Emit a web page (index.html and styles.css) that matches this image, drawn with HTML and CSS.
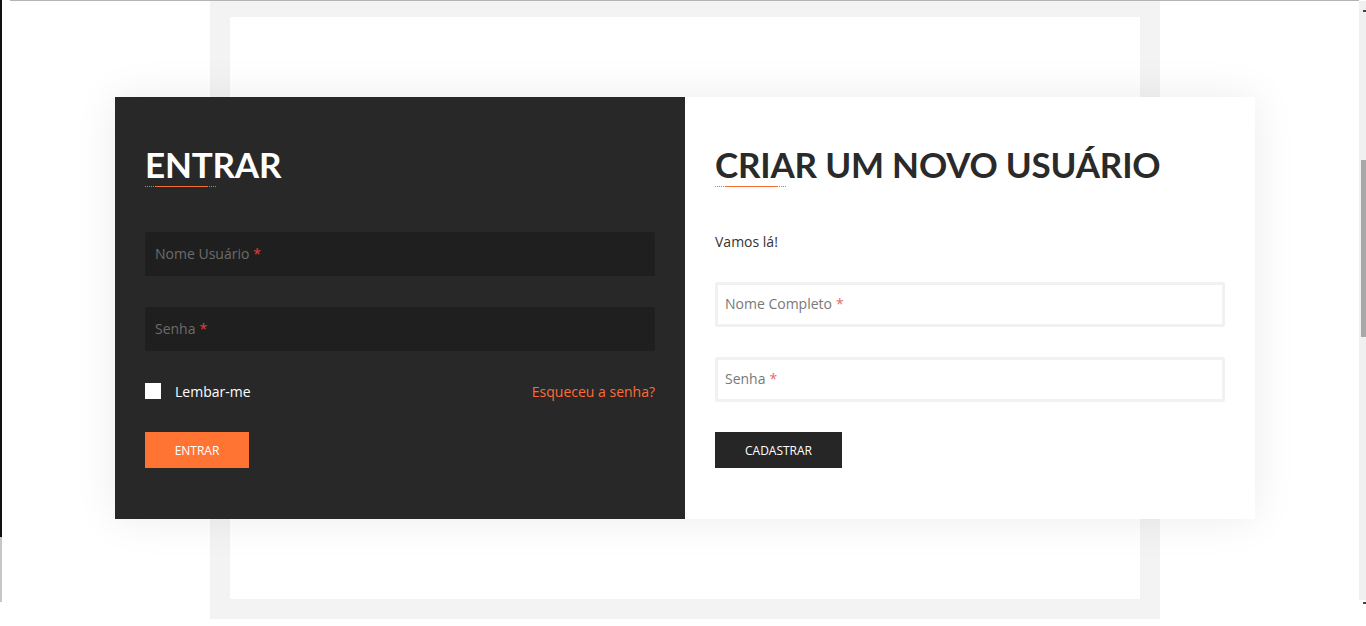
FILE: index.html
```html
<!DOCTYPE html>
<html lang="pt-BR">
<head>
<meta charset="utf-8">
<title>Entrar</title>
<link rel="stylesheet" href="styles.css">
</head>
<body>
<div class="edge"><div class="edge-dark"></div><div class="edge-grey"></div></div>
<main class="main">
  <div class="frame"><div class="frame-inner"></div></div>
</main>
<div class="scrollbar">
  <span class="arrow arrow-up"></span>
  <div class="track"><div class="thumb"></div></div>
  <span class="arrow arrow-down"></span>
</div>

<section class="modal">
  <div class="panel panel-dark">
    <h2 class="title title-light">ENTRAR</h2>
    <div class="underline"><span class="dots"></span><span class="solid"></span><span class="dots"></span></div>
    <div class="field field-dark field-first"><span class="ph">Nome Usuário</span><span class="req">*</span></div>
    <div class="field field-dark field-next"><span class="ph">Senha</span><span class="req">*</span></div>
    <div class="remember-row">
      <label class="remember"><span class="box"></span>Lembar-me</label>
      <a class="forgot" href="#">Esqueceu a senha?</a>
    </div>
    <button class="btn btn-orange">ENTRAR</button>
  </div>
  <div class="panel panel-light">
    <h2 class="title title-dark">CRIAR UM NOVO USUÁRIO</h2>
    <div class="underline"><span class="dots"></span><span class="solid"></span><span class="dots"></span></div>
    <p class="intro">Vamos lá!</p>
    <div class="field field-light field-reg"><span class="ph">Nome Completo</span><span class="req">*</span></div>
    <div class="field field-light field-next"><span class="ph">Senha</span><span class="req">*</span></div>
    <button class="btn btn-dark">CADASTRAR</button>
  </div>
</section>
</body>
</html>
```

FILE: styles.css
```css
* { box-sizing: border-box; }
html, body { margin: 0; padding: 0; }
body {
  width: 1366px;
  height: 626px;
  overflow: hidden;
  background: #ffffff;
  font-family: "Open Sans", "Liberation Sans", sans-serif;
  display: flex;
  position: relative;
}

/* left edge artifact */
.edge { width: 2px; display: flex; flex-direction: column; }
.edge-dark { height: 537px; background: #111; }
.edge-grey { height: 65px; background: #c6c6c6; }

/* background page */
.main {
  flex: 1;
  position: relative;
  padding-left: 208px;
}
.main::before {
  content: "";
  position: absolute;
  left: 8px; right: 0; top: 0;
  height: 1px;
  background: #b4b4b4;
}
.frame {
  width: 950px;
  height: 619px;
  background: #f3f3f3;
  padding: 17px 20px 20px;
}
.frame-inner { width: 100%; height: 100%; background: #ffffff; }

/* scrollbar */
.scrollbar {
  width: 7px;
  display: flex;
  flex-direction: column;
  position: relative;
  padding-top: 1px;
}
.track {
  height: 599px;
  background: #f0f0f0;
  display: flex;
  justify-content: flex-end;
  padding-top: 159px;
}
.thumb { width: 5px; height: 177px; background: #a8a8a8; }
.arrow {
  position: absolute;
  right: 0;
  width: 3px; height: 2px;
  background: #444;
}
.arrow-up { top: 10px; }
.arrow-down { top: 602px; }

/* modal */
.modal {
  position: absolute;
  left: 115px;
  top: 97px;
  width: 1140px;
  height: 422px;
  display: flex;
  box-shadow: 0 0 40px rgba(0, 0, 0, 0.08);
}
.panel {
  width: 570px;
  padding: 46px 30px 0;
  display: flex;
  flex-direction: column;
  align-items: flex-start;
}
.panel-dark { background: #282828; }
.panel-light { background: #ffffff; }

.title {
  margin: 0;
  font-family: Lato, "Open Sans", sans-serif;
  font-weight: 700;
  font-size: 35px;
  line-height: 43px;
  letter-spacing: -0.2px;
}
.title-light { color: #ffffff; }
.title-dark { color: #2a2a2a; }

.underline { display: flex; height: 1px; }
.underline .dots {
  width: 10px;
  background: repeating-linear-gradient(to right, #f26d2e 0 1px, transparent 1px 2px);
}
.underline .solid { width: 52px; background: #f26d2e; }

.field {
  width: 510px;
  display: flex;
  align-items: center;
  font-size: 14px;
  border-radius: 2px;
  padding-left: 10px;
  padding-bottom: 2px;
}
.req { margin-left: 4px; }
.field-dark {
  height: 44px;
  background: #1f1f1f;
  color: #6c6c6c;
}
.field-dark .req { color: #e2403b; }
.field-light {
  height: 45px;
  background: #fff;
  border: 3px solid #f1f1f1;
  padding-left: 7px;
  color: #787878;
}
.field-light .req { color: #e86a6a; }
.field-first { margin-top: 45px; }
.field-next { margin-top: 31px; }
.field-light.field-next { margin-top: 30px; }
.field-reg { margin-top: 30px; }

.remember-row {
  width: 510px;
  margin-top: 29px;
  height: 22px;
  display: flex;
  align-items: center;
  justify-content: space-between;
  font-size: 14px;
}
.remember {
  display: flex;
  align-items: center;
  color: #ffffff;
}
.box {
  width: 16px; height: 16px;
  background: #ffffff;
  margin-right: 14px;
}
.forgot { color: #ff6b35; text-decoration: none; }

.btn {
  border: 0;
  border-radius: 0;
  height: 36px;
  font-family: "Open Sans", "Liberation Sans", sans-serif;
  font-size: 12px;
  color: #ffffff;
  padding: 0;
  cursor: pointer;
}
.btn-orange { background: #ff7433; margin-top: 30px; width: 104px; }
.btn-dark { background: #262626; margin-top: 30px; width: 127px; }

.intro {
  margin: 45px 0 0;
  font-size: 14px;
  line-height: 20px;
  color: #333333;
}
```
